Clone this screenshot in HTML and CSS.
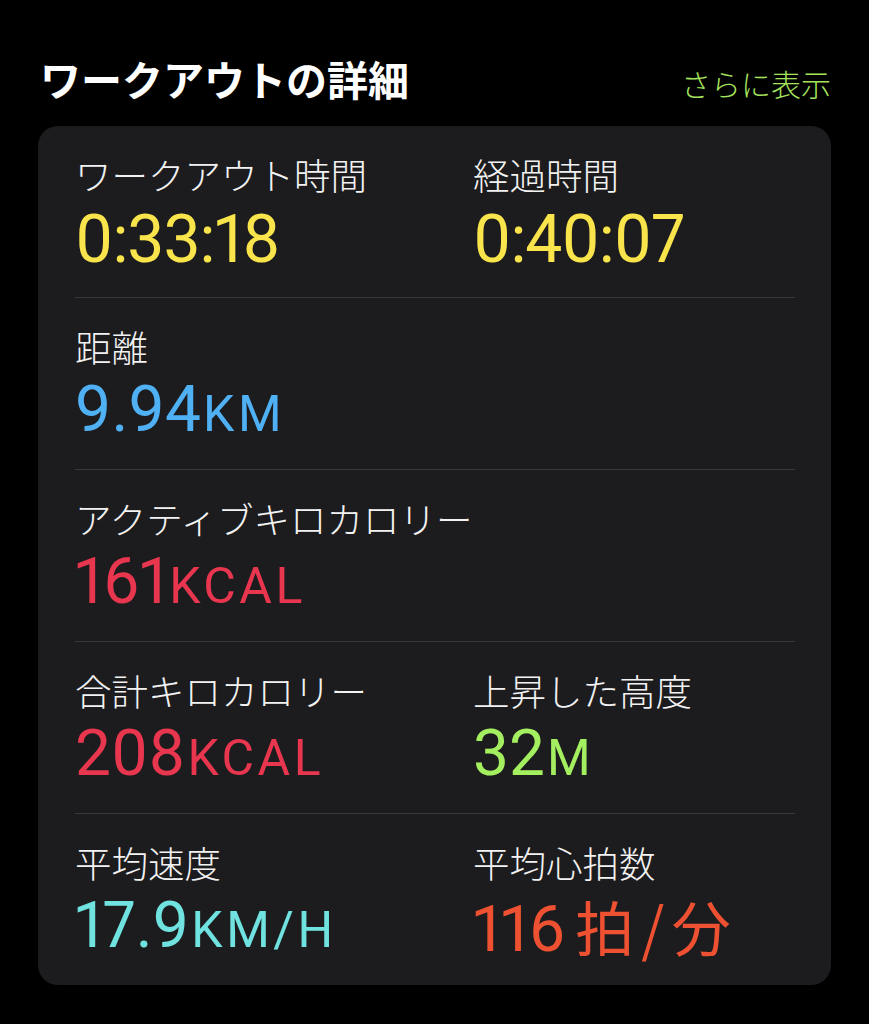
FILE: index.html
```html
<!DOCTYPE html>
<html lang="ja">
<head>
  <meta charset="UTF-8" />
  <meta name="viewport" content="width=device-width, initial-scale=1.0" />
  <title>ワークアウトの詳細</title>
  <link rel="stylesheet" href="styles.css">
</head>
<body>
  <header class="top">
    <h1>ワークアウトの詳細</h1>
    <a class="more" href="#">さらに表示</a>
  </header>

  <div class="card">
    <div class="row">
      <div class="stat">
        <div class="label">ワークアウト時間</div>
        <div class="value tall yellow">0:33:18</div>
      </div>
      <div class="stat">
        <div class="label">経過時間</div>
        <div class="value tall yellow">0:40:07</div>
      </div>
    </div>

    <div class="row">
      <div class="stat">
        <div class="label">距離</div>
        <div class="value blue">9.94<span class="unit">KM</span></div>
      </div>
    </div>

    <div class="row">
      <div class="stat wide">
        <div class="label">アクティブキロカロリー</div>
        <div class="value red">161<span class="unit">KCAL</span></div>
      </div>
    </div>

    <div class="row">
      <div class="stat">
        <div class="label">合計キロカロリー</div>
        <div class="value red">208<span class="unit">KCAL</span></div>
      </div>
      <div class="stat">
        <div class="label">上昇した高度</div>
        <div class="value green">32<span class="unit">M</span></div>
      </div>
    </div>

    <div class="row last">
      <div class="stat">
        <div class="label">平均速度</div>
        <div class="value cyan">17.9<span class="unit">KM/H</span></div>
      </div>
      <div class="stat">
        <div class="label">平均心拍数</div>
        <div class="value orange">116<span class="jp">拍 / 分</span></div>
      </div>
    </div>
  </div>
</body>
</html>
```

FILE: styles.css
```css
body {
  margin: 0;
  padding: 0;
  background-color: #000000;
  color: #ffffff;
  font-family: Roboto, "Noto Sans CJK JP", sans-serif;
}
.top {
  display: flex;
  justify-content: space-between;
  align-items: baseline;
  padding: 50px 38px 0 40px;
  height: 76px;
}
.top h1 {
  margin: 0;
  font-family: "Noto Sans CJK JP", sans-serif;
  font-size: 41px;
  font-weight: 700;
  line-height: 56px;
}
.more {
  font-family: "Noto Sans CJK JP", sans-serif;
  font-size: 30px;
  font-weight: 300;
  color: #a4e35c;
  text-decoration: none;
}
.card {
  margin: 0 38px;
  background-color: #1c1c1e;
  border-radius: 20px;
  padding: 0 36px 0 37px;
}
.row {
  display: grid;
  grid-template-columns: 398px 1fr;
  height: 172px;
  box-sizing: border-box;
  padding-top: 26px;
  border-bottom: 1px solid #38383a;
}
.row.last {
  border-bottom: none;
  height: 171px;
}
.stat.wide {
  grid-column: span 2;
}
.label {
  font-family: "Noto Sans CJK JP", sans-serif;
  font-size: 36.5px;
  font-weight: 300;
  line-height: 46px;
  color: #f2f2f2;
}
.value {
  font-size: 64px;
  line-height: 74px;
  font-weight: 400;
  margin-top: 3px;
  font-variant-numeric: proportional-nums;
}
.value.tall {
  margin-top: 5px;
  font-size: 66px;
  letter-spacing: -1px;
}
.unit {
  font-size: 50px;
  margin-left: 2px;
  letter-spacing: 3.5px;
}
.jp {
  font-family: "Noto Sans CJK JP", sans-serif;
  font-size: 59px;
  font-weight: 400;
  margin-left: 10px;
  word-spacing: -6px;
}
.yellow { color: #f9e44c; }
.blue { color: #4fb0f4; }
.red { color: #e8364f; }
.green { color: #a4ef60; }
.cyan { color: #70e2e0; }
.orange { color: #ee5132; }
```
